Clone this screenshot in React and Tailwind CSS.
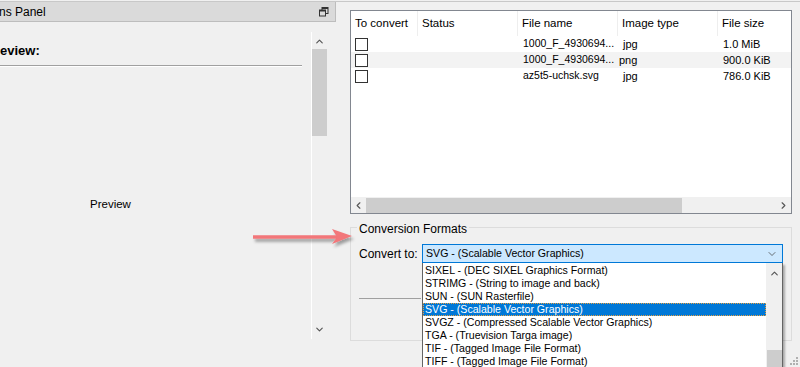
import { ChevronUp, ChevronDown, ChevronLeft, ChevronRight } from "lucide-react"

const files = [
  { name: "1000_F_4930694...", type: "jpg", size: "1.0 MiB" },
  { name: "1000_F_4930694...", type: "png", size: "900.0 KiB" },
  { name: "az5t5-uchsk.svg", type: "jpg", size: "786.0 KiB" },
]

const formats = [
  "SIXEL - (DEC SIXEL Graphics Format)",
  "STRIMG - (String to image and back)",
  "SUN - (SUN Rasterfile)",
  "SVG - (Scalable Vector Graphics)",
  "SVGZ - (Compressed Scalable Vector Graphics)",
  "TGA - (Truevision Targa image)",
  "TIF - (Tagged Image File Format)",
  "TIFF - (Tagged Image File Format)",
]

const RestoreIcon = () => (
  <svg width="10" height="10" viewBox="0 0 10 10" className="text-[#333]">
    <rect x="3" y="0.5" width="6" height="6" fill="none" stroke="currentColor" />
    <rect x="0.5" y="3" width="6" height="6" fill="#dadada" stroke="currentColor" />
    <rect x="0.5" y="3" width="6" height="1.5" fill="currentColor" />
    <rect x="3" y="0.5" width="6" height="1.5" fill="currentColor" />
  </svg>
)

const App = () => {
  return (
    <div
      className="relative w-[800px] h-[367px] overflow-hidden bg-[#f0f0f0] text-[11px] text-black"
      style={{ fontFamily: '"Liberation Sans", Arial, sans-serif' }}
    >
      <div className="h-[2px] border-b border-[#c8c8c8]"></div>
      <div className="flex">
        {/* left panel */}
        <div className="w-[336px] flex flex-col">
          <div className="h-[20px] bg-[#dadada] border-b border-r border-[#bdbdbd] flex items-center justify-between pr-[6px]">
            <span className="ml-[-1px] text-[12px]">ns Panel</span>
            <RestoreIcon />
          </div>
          <div className="flex mt-[10px]">
            <div className="w-[311px] flex flex-col">
              <div className="mt-[9px] w-[302px] pb-[4px] border-b border-[#a0a0a0] shadow-[0_1px_0_#fff]">
                <span className="font-bold text-[13px]">eview:</span>
              </div>
              <div className="pl-[90px] mt-[130px] text-[11.5px]">Preview</div>
            </div>
            <div className="w-[16px] h-[307px] border-l border-white flex flex-col items-center">
              <ChevronUp size={11} strokeWidth={2.5} className="mt-[4px] text-[#555]" />
              <div className="mt-[2px] w-[15px] h-[87px] bg-[#cdcdcd]"></div>
              <div className="flex-1"></div>
              <ChevronDown size={11} strokeWidth={2.5} className="mb-[4px] text-[#555]" />
            </div>
          </div>
        </div>

        {/* right panel */}
        <div className="flex-1 pl-[14px] pr-[8px]">
          <div className="mt-[8px] h-[204px] border border-[#828790] bg-white flex flex-col text-[11.5px]">
            <div className="flex h-[25px] items-center">
              <div className="w-[67px] pl-[4px] border-r border-[#eeeeee] h-full flex items-center">To convert</div>
              <div className="w-[100px] pl-[4px] border-r border-[#eeeeee] h-full flex items-center">Status</div>
              <div className="w-[100px] pl-[4px] border-r border-[#eeeeee] h-full flex items-center">File name</div>
              <div className="w-[100px] pl-[4px] border-r border-[#eeeeee] h-full flex items-center">Image type</div>
              <div className="flex-1 pl-[4px] h-full flex items-center">File size</div>
            </div>
            {files.map((f, i) => (
              <div key={i} className={`flex h-[16px] items-center text-[11px] ${i === 1 ? "bg-[#f3f3f3]" : ""}`}>
                <div className="w-[67px] pl-[4px]">
                  <div className="w-[13px] h-[13px] border border-[#333] bg-white"></div>
                </div>
                <div className="w-[100px]"></div>
                <div className="w-[98px] pl-[5px] whitespace-nowrap text-[10.5px]">{f.name}</div>
                <div className={`w-[102px] ${i === 1 ? "pl-[3px]" : "pl-[7px]"}`}>{f.type}</div>
                <div className="flex-1 pl-[5px]">{f.size}</div>
              </div>
            ))}
            <div className="flex-1"></div>
            <div className="h-[16px] bg-[#f0f0f0] flex items-center">
              <ChevronLeft size={11} strokeWidth={2.5} className="ml-[2px] text-[#555]" />
              <div className="ml-[2px] w-[316px] h-[15px] bg-[#cdcdcd]"></div>
              <div className="flex-1"></div>
              <ChevronRight size={11} strokeWidth={2.5} className="mr-[2px] text-[#555]" />
            </div>
          </div>

          {/* group box */}
          <div className="relative mt-[13px] h-[114px] border border-[#dcdcdc] pl-[8px]">
            <div className="absolute left-[6px] top-[-8px] px-[2px] bg-[#f0f0f0] text-[12px]">Conversion Formats</div>
            <div className="flex items-center mt-[16px]">
              <span className="w-[63px] text-[12px]">Convert to:</span>
              <div className="relative w-[361px]">
                <div className="h-[19px] border border-[#0078d7] bg-[#cce8ff] flex items-center justify-between pl-[3px] pr-[4px] text-[10.6px]">
                  <span>SVG - (Scalable Vector Graphics)</span>
                  <ChevronDown size={12} strokeWidth={1.5} className="text-[#444]" />
                </div>
                {/* dropdown list */}
                <div className="absolute left-0 top-[19px] w-[361px] h-[110px] bg-white border border-[#646464] border-t-0 shadow-[2px_2px_2px_rgba(0,0,0,0.3)] flex z-10">
                  <div className="flex-1 pt-[1px]">
                    {formats.map((fmt, i) => (
                      <div
                        key={i}
                        className={`h-[13px] leading-[13px] pl-[2px] text-[10.6px] ${
                          i === 3 ? "bg-[#0078d7] text-white outline-1 outline-dotted outline-[#e8a040] -outline-offset-1" : ""
                        }`}
                      >
                        {fmt}
                      </div>
                    ))}
                  </div>
                  <div className="w-[16px] bg-[#f0f0f0] flex flex-col items-center">
                    <ChevronUp size={11} strokeWidth={2.5} className="mt-[5px] text-[#555]" />
                    <div className="flex-1"></div>
                    <div className="w-[15px] h-[22px] bg-[#cdcdcd]"></div>
                  </div>
                </div>
              </div>
            </div>
            <div className="mt-[35px] w-[62px] border-b border-[#a0a0a0]"></div>
          </div>
        </div>
      </div>

      {/* annotation arrow */}
      <svg className="absolute left-[248px] top-[225px]" width="108" height="24" viewBox="0 0 108 24">
        <defs>
          <filter id="sh" x="-10%" y="-50%" width="120%" height="200%">
            <feDropShadow dx="2" dy="3" stdDeviation="1.5" floodColor="#000" floodOpacity="0.35" />
          </filter>
        </defs>
        <g filter="url(#sh)">
          <line x1="5" y1="12" x2="92" y2="12" stroke="#f2777a" strokeWidth="3.5" />
          <path d="M84 4 L104 11 L84 19 L89 12 Z" fill="#f2777a" />
        </g>
      </svg>

      {/* resize grip */}
      <svg className="absolute right-[1px] bottom-[1px]" width="10" height="10" viewBox="0 0 10 10">
        <rect x="7" y="1" width="2" height="2" fill="#b0b0b0" />
        <rect x="4" y="4" width="2" height="2" fill="#b0b0b0" />
        <rect x="7" y="4" width="2" height="2" fill="#b0b0b0" />
        <rect x="1" y="7" width="2" height="2" fill="#b0b0b0" />
        <rect x="4" y="7" width="2" height="2" fill="#b0b0b0" />
        <rect x="7" y="7" width="2" height="2" fill="#b0b0b0" />
      </svg>
    </div>
  )
}

export default App
